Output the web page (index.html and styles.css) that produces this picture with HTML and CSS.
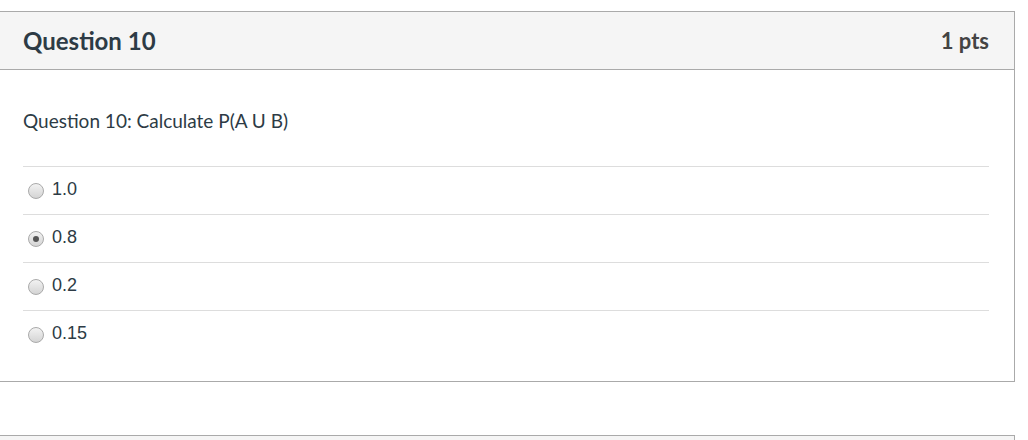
FILE: index.html
```html
<!DOCTYPE html>
<html lang="en">
<head>
    <meta charset="UTF-8">
    <title>Quiz</title>
    <link rel="stylesheet" href="styles.css">
</head>
<body>
    <div class="question">
        <div class="question-header">
            <span class="question-name">Question 10</span>
            <span class="question-points">1 pts</span>
        </div>
        <div class="question-body">
            <div class="question-text">Question 10: Calculate P(A U B)</div>
            <div class="answers">
                <label class="answer"><span class="radio"></span><span class="answer-text">1.0</span></label>
                <label class="answer"><span class="radio checked"></span><span class="answer-text">0.8</span></label>
                <label class="answer"><span class="radio"></span><span class="answer-text">0.2</span></label>
                <label class="answer"><span class="radio"></span><span class="answer-text">0.15</span></label>
            </div>
        </div>
    </div>

    <div class="question next">
        <div class="question-header"></div>
    </div>
</body>
</html>
```

FILE: styles.css
```css
body { margin: 0; font-family: Lato, "Liberation Sans", sans-serif; color: #2d3b45; background: #fff; overflow: hidden; }
.question { margin: 11px 0 0 -1px; width: 1014px; border: 1px solid #aaa; background: #fff; }
.question.next { margin-top: 53px; }
.question-header { height: 57px; display: flex; align-items: center; justify-content: space-between; padding: 0 25px 0 23px; background: #f5f5f5; border-bottom: 1px solid #aaa; }
.question-name { font-weight: bold; font-size: 24px; }
.question-points { font-weight: bold; font-size: 22px; color: #444; }
.question-body { padding: 0 25px 23px 23px; }
.question-text { font-size: 19px; padding: 36px 0 30px; line-height: 30px; }
.answer { display: flex; align-items: center; height: 47px; border-top: 1px solid #ddd; }
.radio { width: 14px; height: 14px; margin: 0 8px 0 5px; border: 1px solid #aaa; border-radius: 50%; background: linear-gradient(#f2f2f2, #d4d4d4); display: flex; align-items: center; justify-content: center; }
.radio.checked::after { content: ""; width: 6px; height: 6px; border-radius: 50%; background: #555; }
.answer-text { font-family: "Liberation Sans", Arial, sans-serif; font-size: 18px; margin-top: -2px; }
```
